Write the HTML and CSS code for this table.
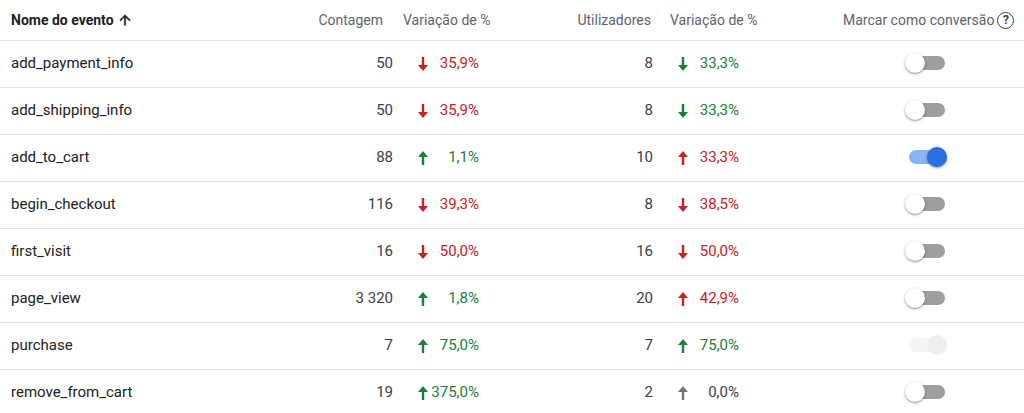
FILE: index.html
```html
<!DOCTYPE html>
<html lang="pt">
<head>
<meta charset="utf-8">
<title>Eventos</title>
<link rel="stylesheet" href="styles.css">
</head>
<body>
<div class="table">
  <div class="row head">
    <div class="cell name">Nome do evento <svg class="sort" viewBox="0 0 24 24" width="16" height="16"><path d="M4 12l1.41 1.41L11 7.83V20h2V7.83l5.58 5.59L20 12l-8-8-8 8z"/></svg></div>
    <div class="cell num num-h1">Contagem</div>
    <div class="cell var-h v1">Variação de %</div>
    <div class="cell num num-h2">Utilizadores</div>
    <div class="cell var-h v2">Variação de %</div>
    <div class="cell conv-h">Marcar como conversão <span class="help">?</span></div>
  </div>

  <div class="row">
    <div class="cell name">add_payment_info</div>
    <div class="cell num">50</div>
    <div class="cell var red"><svg class="arr" viewBox="0 0 10 14"><path d="M3.8 0h2.4v8h3.8l-5 6-5-6h3.8z"/></svg><span class="val">35,9%</span></div>
    <div class="cell num">8</div>
    <div class="cell var green"><svg class="arr" viewBox="0 0 10 14"><path d="M3.8 0h2.4v8h3.8l-5 6-5-6h3.8z"/></svg><span class="val">33,3%</span></div>
    <div class="cell conv"><div class="switch"><div class="track"></div><div class="thumb"></div></div></div>
  </div>

  <div class="row">
    <div class="cell name">add_shipping_info</div>
    <div class="cell num">50</div>
    <div class="cell var red"><svg class="arr" viewBox="0 0 10 14"><path d="M3.8 0h2.4v8h3.8l-5 6-5-6h3.8z"/></svg><span class="val">35,9%</span></div>
    <div class="cell num">8</div>
    <div class="cell var green"><svg class="arr" viewBox="0 0 10 14"><path d="M3.8 0h2.4v8h3.8l-5 6-5-6h3.8z"/></svg><span class="val">33,3%</span></div>
    <div class="cell conv"><div class="switch"><div class="track"></div><div class="thumb"></div></div></div>
  </div>

  <div class="row">
    <div class="cell name">add_to_cart</div>
    <div class="cell num">88</div>
    <div class="cell var green"><svg class="arr" viewBox="0 0 10 14"><path d="M3.8 14h2.4V6h3.8L5 0 0 6h3.8z"/></svg><span class="val">1,1%</span></div>
    <div class="cell num">10</div>
    <div class="cell var red"><svg class="arr" viewBox="0 0 10 14"><path d="M3.8 14h2.4V6h3.8L5 0 0 6h3.8z"/></svg><span class="val">33,3%</span></div>
    <div class="cell conv"><div class="switch on"><div class="track"></div><div class="thumb"></div></div></div>
  </div>

  <div class="row">
    <div class="cell name">begin_checkout</div>
    <div class="cell num">116</div>
    <div class="cell var red"><svg class="arr" viewBox="0 0 10 14"><path d="M3.8 0h2.4v8h3.8l-5 6-5-6h3.8z"/></svg><span class="val">39,3%</span></div>
    <div class="cell num">8</div>
    <div class="cell var red"><svg class="arr" viewBox="0 0 10 14"><path d="M3.8 0h2.4v8h3.8l-5 6-5-6h3.8z"/></svg><span class="val">38,5%</span></div>
    <div class="cell conv"><div class="switch"><div class="track"></div><div class="thumb"></div></div></div>
  </div>

  <div class="row">
    <div class="cell name">first_visit</div>
    <div class="cell num">16</div>
    <div class="cell var red"><svg class="arr" viewBox="0 0 10 14"><path d="M3.8 0h2.4v8h3.8l-5 6-5-6h3.8z"/></svg><span class="val">50,0%</span></div>
    <div class="cell num">16</div>
    <div class="cell var red"><svg class="arr" viewBox="0 0 10 14"><path d="M3.8 0h2.4v8h3.8l-5 6-5-6h3.8z"/></svg><span class="val">50,0%</span></div>
    <div class="cell conv"><div class="switch"><div class="track"></div><div class="thumb"></div></div></div>
  </div>

  <div class="row">
    <div class="cell name">page_view</div>
    <div class="cell num">3 320</div>
    <div class="cell var green"><svg class="arr" viewBox="0 0 10 14"><path d="M3.8 14h2.4V6h3.8L5 0 0 6h3.8z"/></svg><span class="val">1,8%</span></div>
    <div class="cell num">20</div>
    <div class="cell var red"><svg class="arr" viewBox="0 0 10 14"><path d="M3.8 14h2.4V6h3.8L5 0 0 6h3.8z"/></svg><span class="val">42,9%</span></div>
    <div class="cell conv"><div class="switch"><div class="track"></div><div class="thumb"></div></div></div>
  </div>

  <div class="row">
    <div class="cell name">purchase</div>
    <div class="cell num">7</div>
    <div class="cell var green"><svg class="arr" viewBox="0 0 10 14"><path d="M3.8 14h2.4V6h3.8L5 0 0 6h3.8z"/></svg><span class="val">75,0%</span></div>
    <div class="cell num">7</div>
    <div class="cell var green"><svg class="arr" viewBox="0 0 10 14"><path d="M3.8 14h2.4V6h3.8L5 0 0 6h3.8z"/></svg><span class="val">75,0%</span></div>
    <div class="cell conv"><div class="switch on disabled"><div class="track"></div><div class="thumb"></div></div></div>
  </div>

  <div class="row">
    <div class="cell name">remove_from_cart</div>
    <div class="cell num">19</div>
    <div class="cell var green"><svg class="arr" viewBox="0 0 10 14"><path d="M3.8 14h2.4V6h3.8L5 0 0 6h3.8z"/></svg><span class="val">375,0%</span></div>
    <div class="cell num">2</div>
    <div class="cell var gray"><svg class="arr" viewBox="0 0 10 14"><path d="M3.8 14h2.4V6h3.8L5 0 0 6h3.8z"/></svg><span class="val">0,0%</span></div>
    <div class="cell conv"><div class="switch"><div class="track"></div><div class="thumb"></div></div></div>
  </div>
</div>
</body>
</html>
```

FILE: styles.css
```css
html, body {
  margin: 0;
  padding: 0;
  background: #ffffff;
}

body {
  font-family: Roboto, "Liberation Sans", Arial, sans-serif;
  font-size: 15px;
  color: #212121;
  overflow: hidden;
}

.table {
  width: 1024px;
}

.row {
  display: grid;
  grid-template-columns: 300px 93px 167px 93px 190px 1fr;
  height: 46px;
  border-bottom: 1px solid #e0e0e6;
  align-items: center;
}

.row.head {
  height: 40px;
  font-size: 14px;
  color: #5f6368;
}

.cell {
  display: flex;
  align-items: center;
  white-space: nowrap;
}

.row:not(.head) .cell {
  margin-top: -2px;
}

.name {
  padding-left: 11px;
}

.head .name {
  font-weight: 700;
  color: #202124;
  gap: 3px;
}

.sort {
  fill: #202124;
  stroke: #202124;
  stroke-width: 0.8;
}

.num {
  justify-content: flex-end;
  color: #3c4043;
}

.head .num {
  color: #5f6368;
}

.num-h1 {
  padding-right: 10px;
}

.num-h2 {
  padding-right: 2px;
}

.var-h.v1 {
  padding-left: 10px;
}

.var-h.v2 {
  padding-left: 17px;
}

.var {
  padding-left: 25px;
}

.arr {
  width: 10px;
  height: 14px;
  flex: none;
  margin-top: 1px;
}

.val {
  width: 51px;
  text-align: right;
}

.red {
  color: #c5221f;
  fill: #c5221f;
}

.green {
  color: #188038;
  fill: #188038;
}

.gray {
  color: #3c4043;
  fill: #757575;
}

.conv-h {
  justify-content: flex-end;
  padding-right: 10px;
  gap: 3px;
}

.help {
  display: inline-flex;
  align-items: center;
  justify-content: center;
  width: 15px;
  height: 15px;
  border: 1.8px solid #3c4043;
  border-radius: 50%;
  font-size: 12px;
  font-weight: 700;
  color: #3c4043;
  line-height: 1;
}

.conv {
  justify-content: center;
  padding-left: 4px;
  padding-right: 20px;
}

.switch {
  position: relative;
  width: 42px;
  height: 20px;
}

.track {
  position: absolute;
  left: 4px;
  top: 3px;
  width: 36px;
  height: 14px;
  border-radius: 7px;
  background: #9e9e9e;
}

.thumb {
  position: absolute;
  left: 0;
  top: 0;
  width: 20px;
  height: 20px;
  border-radius: 50%;
  background: #ffffff;
  box-shadow: 0 1px 3px rgba(0, 0, 0, 0.35), 0 1px 1px rgba(0, 0, 0, 0.14);
}

.switch.on .track {
  background: #8ab4f8;
}

.switch.on .thumb {
  left: 22px;
  background: #2a6fdf;
}

.switch.disabled .track {
  background: #f5f5f5;
}

.switch.disabled .thumb {
  background: #eeeeee;
  box-shadow: none;
}
```
